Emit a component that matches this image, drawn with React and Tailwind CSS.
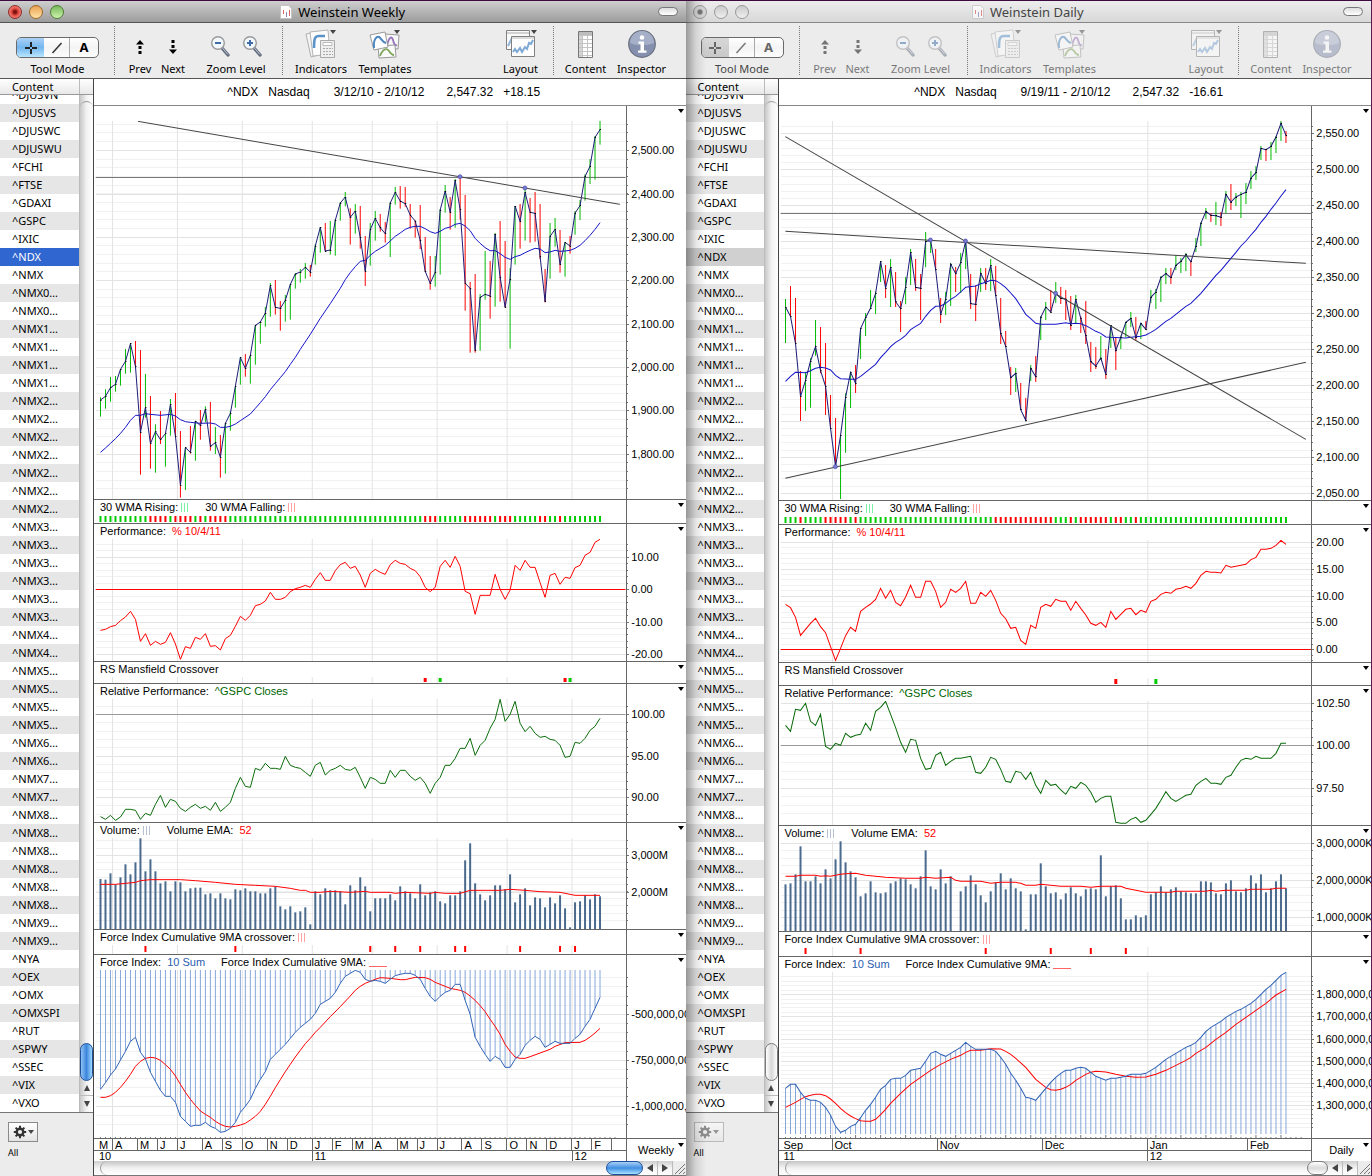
import React from 'react';
import clsx from 'clsx';

const SYMBOLS = [
  '^DJUSVN', '^DJUSVS', '^DJUSWC', '^DJUSWU', '^FCHI', '^FTSE', '^GDAXI', '^GSPC', '^IXIC', '^NDX', '^NMX',
  '^NMX0…', '^NMX0…', '^NMX1…', '^NMX1…', '^NMX1…', '^NMX1…',
  '^NMX2…', '^NMX2…', '^NMX2…', '^NMX2…', '^NMX2…', '^NMX2…', '^NMX2…',
  '^NMX3…', '^NMX3…', '^NMX3…', '^NMX3…', '^NMX3…', '^NMX3…',
  '^NMX4…', '^NMX4…', '^NMX5…', '^NMX5…', '^NMX5…', '^NMX5…', '^NMX6…', '^NMX6…', '^NMX7…', '^NMX7…',
  '^NMX8…', '^NMX8…', '^NMX8…', '^NMX8…', '^NMX8…', '^NMX8…', '^NMX9…', '^NMX9…',
  '^NYA', '^OEX', '^OMX', '^OMXSPI', '^RUT', '^SPWY', '^SSEC', '^VIX', '^VXO',
];

// All plots share one unit system: a bar every 15 units, 3 units to a pixel.
const PLOT_W = 1596;
const barX = (i) => 19.5 + 15 * i;
const snap = (v) => Math.floor(v / 3) * 3 + 1.5;
const nums = (s) => s.trim().split(/\s+/).map(Number);
const pairs = (s) => s.split(',').map((p) => nums(p));
const runs = (s) => s.split(' ').flatMap((r) => Array(Number(r.slice(1))).fill(r[0]));
const steps = (base, step, from, to) =>
  Array.from({ length: to - from + 1 }, (_, k) => base + step * (from + k));

const RED = '#f00';
const GREEN = '#0b0';
const NAVY = '#1c1c78';

/* ---------- weekly data ---------- */

// close high low direction
const weeklyBars = `885 877 935 g,874 853 911 g,848 816 890 g,838 813 860 g,793 792 842 g,769 732 806 g,716 714 803 g,784 708 784 r,982 735 1109 r,907 807 938 g,
1016 873 1091 r,980 958 1103 g,1004 918 1017 r,986 986 1085 g,898 882 992 g,993 864 993 r,1140 978 1178 r,1028 1028 1155 g,1042 963 1046 r,948 948 1067 g,
962 915 1004 r,912 904 952 g,1024 891 1037 r,1013 966 1047 g,1057 990 1118 r,955 955 1106 g,925 918 977 g,844 844 908 g,758 757 839 g,790 747 815 r,
751 751 836 g,661 661 779 g,651 648 716 g,624 606 665 g,542 534 635 g,607 525 629 r,610 588 677 r,586 570 650 g,538 537 644 g,507 504 551 g,
501 492 533 g,487 474 521 g,501 480 515 r,423 417 479 g,367 366 443 g,438 354 438 r,435 348 449 g,346 342 452 g,294 291 347 g,276 261 304 g,
337 310 419 r,318 297 386 g,397 303 431 r,498 393 543 r,374 354 482 g,340 318 407 g,368 327 380 r,386 351 413 r,294 291 456 g,262 246 299 g,
288 243 311 r,296 246 305 r,330 297 371 r,348 346 398 r,406 300 432 r,499 396 499 r,535 453 554 r,502 453 545 g,315 312 509 g,258 240 323 g,
322 276 374 r,226 222 368 g,314 220 344 r,535 270 617 r,550 531 743 r,736 507 743 r,577 567 737 g,568 438 584 g,573 468 641 r,387 384 605 g,
517 348 590 r,606 408 607 r,522 489 731 g,303 303 479 g,349 297 431 r,262 249 407 g,322 279 413 r,325 261 410 r,454 297 462 r,589 492 592 r,
394 354 521 g,373 339 425 g,478 375 503 r,412 411 515 g,423 393 446 r,324 318 389 g,302 285 345 g,214 208 287 g,184 162 237 g,97 93 224 g,74 48 119 g`;

const weeklyMa =
  '0 1042,1 1029,2 1015,3 1001,4 985,5 967,6 946,7 931,8 931,9 926,10 928,12 931,14 928,15 933,16 944,17 950,18 952,20 955,22 954,23 957,24 967,25 967,26 964,27 957,28 947,30 927,31 910,32 893,33 875,34 854,35 836,36 818,37 800,38 778,39 757,40 733,42 688,44 640,46 596,48 550,49 524,50 503,51 485,52 469,53 466,54 451,55 439,56 430,57 421,58 408,59 394,60 384,61 373,62 367,63 364,64 364,65 371,66 380,67 385,68 379,69 370,70 366,71 358,72 355,73 363,74 377,75 400,76 415,77 428,78 437,79 437,80 446,81 457,82 463,83 455,84 451,85 443,86 436,87 430,88 432,89 443,90 441,91 436,92 439,93 438,94 436,95 430,96 421,97 407,98 391,99 373,100 353';

const weeklyPerf = nums(`406 403 395 391 377 366 349 373 439 416 451 439 448 442 413 447 493 455 460 427
433 416 454 452 465 431 421 394 364 376 361 332 328 318 292 313 313 307 290 281
277 271 277 253 233 256 256 227 209 202 220 214 240 277 235 223 232 238 209 196
205 208 220 227 245 277 290 277 214 196 217 184 214 289 296 358 301 301 301 238
283 313 285 211 226 196 217 217 263 307 241 235 268 247 250 218 211 181 172 142 133`);

const weeklyRel = nums(`965 973 961 976 966 943 943 946 973 955 961 928 901 937 913 919 940 949 937 928
940 934 946 922 949 937 922 880 847 874 877 820 826 805 820 820 823 784 811 817
820 832 844 811 802 840 826 820 811 823 826 817 847 880 847 853 865 865 826 847
826 826 844 856 847 865 895 865 847 811 811 790 760 760 730 781 751 736 700 673
613 679 658 619 685 710 694 715 727 724 733 736 751 787 784 742 745 730 706 694 670`);

const weeklyVol = nums(`177 179 160 193 172 133 163 127 55 154 118 154 190 184 214 184 187 214 205 203
203 223 220 235 220 235 238 208 211 205 214 214 220 220 205 199 259 268 259 277
274 262 313 214 223 205 211 211 214 253 196 211 172 199 274 235 235 235 223 241
199 214 220 235 193 226 217 214 244 250 226 226 214 121 70 190 223 241 226 196
196 208 163 247 223 205 256 232 235 262 232 250 226 265 322 247 244 226 238 223 229`);

const weeklyVolEma =
  '0 193,3 193,5 190,7 187,8 182,10 179,16 179,19 182,23 187,27 193,31 196,35 199,38 205,40 211,41 211,42 217,44 217,46 214,50 217,53 214,54 217,58 217,59 220,61 217,66 220,67 217,69 220,72 220,74 211,80 211,82 208,85 211,88 215,92 217,95 226,100 226';

const weeklyForce = nums(`808 788 765 747 720 694 664 652 697 717 757 784 811 829 829 847 889 904 919 916
916 907 919 925 937 934 925 907 877 859 838 805 778 755 718 703 688 673 655 637
622 610 598 580 553 544 535 517 490 469 460 451 457 478 484 481 484 490 478 467
463 460 460 466 478 505 529 544 529 517 511 493 493 541 583 652 679 703 724 709
718 742 742 718 703 676 661 649 658 682 673 664 670 670 670 655 643 619 598 565 532`);

const weeklyForceMa =
  '0 832,1 832,2 827,3 817,4 802,5 784,6 763,7 739,8 724,9 715,10 712,11 714,12 721,13 734,14 748,15 768,16 793,17 817,18 838,19 856,20 873,21 883,22 892,23 904,24 913,25 919,26 921,27 919,28 915,29 910,30 900,31 889,32 874,33 853,34 829,35 803,36 779,37 755,38 733,39 711,40 691,41 671,42 655,43 637,44 622,45 606,46 590,48 560,50 528,51 511,52 499,53 490,54 484,55 478,56 473,58 475,60 479,61 479,63 472,65 473,66 478,67 487,68 493,69 499,70 505,71 508,72 511,73 517,74 528,75 541,76 557,77 575,78 598,79 619,80 643,81 673,82 694,83 711,84 715,85 715,86 710,88 699,90 688,91 679,93 668,96 667,97 661,98 651,99 639,100 625';

/* ---------- daily data ---------- */

const dailyBars = `606 582 714 g,634 543 634 r,716 579 716 r,875 798 948 r,826 802 918 g,768 760 908 g,725 645 752 g,797 666 805 r,844 714 930 r,970 870 970 r,
1085 939 1085 r,991 991 1182 g,877 865 1043 g,802 802 909 g,835 780 864 r,671 671 762 g,638 624 693 g,609 555 609 g,565 560 627 g,470 469 531 g,
549 480 579 r,487 462 606 g,590 501 606 r,611 588 681 r,546 516 598 g,442 432 540 g,547 462 558 r,550 507 645 r,409 381 487 g,407 405 444 g,
494 432 494 r,628 579 654 r,583 561 630 g,477 474 603 g,506 486 561 r,473 444 564 g,408 408 492 g,596 507 612 r,598 541 648 r,505 489 561 g,
535 489 555 r,482 462 558 g,571 483 571 r,685 579 717 r,724 678 724 r,818 786 870 r,805 789 861 g,914 834 914 r,946 879 946 r,790 780 828 g,
815 753 831 r,637 633 705 g,606 591 645 g,621 555 621 r,565 531 594 g,580 546 597 r,582 555 645 r,662 573 675 r,583 570 655 g,640 634 684 r,
692 588 717 r,770 711 801 r,783 726 792 r,759 693 765 g,808 732 822 r,662 661 729 g,736 696 795 r,696 692 732 g,652 650 697 g,640 621 666 g,
697 636 708 r,655 654 702 g,673 648 673 r,577 555 594 g,561 552 612 g,518 513 591 g,506 489 537 g,518 489 537 r,481 450 495 g,469 459 504 g,
449 444 498 g,470 470 513 r,424 399 441 g,355 352 423 g,319 309 342 g,331 325 351 r,332 291 360 g,337 321 363 r,268 258 325 g,291 237 315 r,
276 264 303 g,268 261 339 g,262 234 297 g,219 198 252 g,203 183 225 g,130 123 165 g,134 132 168 r,124 111 165 g,96 93 144 g,55 48 108 g,91 78 114 r`;

const dailyMa =
  '0 829,1 814,2 802,4 803,5 797,6 790,7 787,8 789,9 795,10 811,11 821,13 823,14 823,15 814,16 802,17 790,18 778,19 758,20 742,21 725,22 712,23 703,24 691,25 674,26 664,27 655,28 634,29 616,30 604,31 603,32 595,33 583,34 574,35 561,36 547,38 543,39 536,40 532,41 526,42 527,43 536,44 548,45 564,46 581,47 604,48 628,49 641,50 655,51 658,54 658,56 653,57 656,58 655,59 656,60 662,61 670,62 679,63 685,64 696,65 697,68 699,69 697,70 695,71 694,72 690,73 682,74 673,75 661,76 649,77 640,78 628,79 616,80 604,81 595,82 580,83 565,84 547,85 529,86 511,87 496,88 478,89 460,90 442,91 423,92 408,93 390,94 373,95 352,96 334,97 313,98 294,99 273,100 254';

const dailyPerf = nums(`313 323 352 406 388 370 355 380 398 440 481 445 407 382 394 334 322 312 298 265
295 271 307 317 291 256 292 292 244 244 274 322 307 268 277 265 244 310 310 277
289 271 301 340 356 385 382 421 433 376 385 322 313 319 298 304 304 331 304 325
345 370 376 367 382 334 358 343 328 325 344 331 337 304 298 283 277 280 268 265
259 265 250 226 214 217 217 219 196 202 199 196 193 179 172 148 148 145 136 121 133`);

const dailyRel = nums(`676 694 628 631 610 664 676 643 739 748 730 736 700 712 706 703 670 691 634 622
604 643 683 727 757 718 721 775 808 805 766 757 796 784 775 775 772 769 817 820
802 772 778 808 844 847 814 817 838 817 856 880 841 856 853 870 883 859 865 847
856 877 907 895 889 889 967 970 970 958 952 967 961 943 925 901 875 895 904 895
886 883 856 844 835 850 850 853 832 826 802 781 775 778 769 775 775 775 760 730 730`);

const dailyVol = nums(`193 190 163 79 184 184 169 190 148 175 118 64 127 154 172 229 220 184 217 220
217 190 184 175 178 193 205 169 91 199 208 148 190 169 340 214 199 166 193 226
247 214 187 160 208 175 205 214 328 223 223 130 199 220 217 238 220 202 220 229
208 205 208 106 229 199 196 235 298 298 286 292 286 223 217 199 217 208 202 214
217 220 220 184 184 187 220 223 190 181 214 217 205 166 190 163 217 205 184 163 205`);

const dailyVolEma =
  '0 169,2 169,3 166,6 166,7 169,8 167,9 169,11 163,12 161,14 160,16 166,20 172,24 175,27 175,28 172,30 175,33 172,34 181,35 184,39 184,41 190,43 187,46 187,47 190,48 196,50 196,51 193,55 199,59 199,61 202,63 199,67 199,68 205,70 211,72 217,77 217,78 214,84 214,85 211,86 214,88 211,92 211,93 208,97 208,98 205,100 205';

const dailyForce = nums(`805 793 793 817 835 841 841 847 862 886 919 937 931 919 913 893 871 853 832 808
796 778 775 775 766 751 748 745 724 700 694 703 709 700 691 682 667 679 688 688
688 688 694 712 733 760 781 805 832 835 841 823 805 787 772 760 751 751 745 742
745 757 769 775 781 775 775 772 769 763 763 763 760 751 742 730 718 709 700 691
682 676 667 652 634 622 613 604 592 583 574 568 559 550 538 523 508 496 481 466 457`);

const dailyForceMa =
  '0 862,2 847,3 838,4 830,5 826,6 823,7 823,8 827,9 837,10 850,11 865,12 878,13 888,14 896,15 902,16 904,17 904,18 898,19 884,20 868,21 850,23 820,25 793,27 772,29 751,31 733,33 718,35 706,36 697,37 691,39 691,41 686,43 687,44 694,45 703,46 715,48 742,50 778,52 802,53 809,54 811,55 808,56 802,57 793,58 781,59 772,60 763,61 757,62 754,64 756,66 763,68 769,70 772,72 771,74 763,76 751,78 736,80 721,81 712,82 700,84 682,86 658,88 637,90 613,92 592,94 571,96 550,98 525,100 508';

/* ---------- legends ---------- */

const LEGENDS = {
  wma: [
    { label: '30 WMA Rising:', swatch: 'text-green-300' },
    { label: '30 WMA Falling:', swatch: 'text-red-300' },
  ],
  perf: [{ label: 'Performance:', value: '% 10/4/11', tone: 'text-[#f00]' }],
  mansfield: [{ label: 'RS Mansfield Crossover' }],
  rel: [{ label: 'Relative Performance:', value: '^GSPC Closes', tone: 'text-[#006400]' }],
  vol: [
    { label: 'Volume:', swatch: 'text-[#b4c2d2]' },
    { label: 'Volume EMA:', value: '52', tone: 'text-[#f00]' },
  ],
  cross: [{ label: 'Force Index Cumulative 9MA crossover:', swatch: 'text-red-300' }],
  force: [
    { label: 'Force Index:', value: '10 Sum', tone: 'text-[#2a5db0]' },
    { label: 'Force Index Cumulative 9MA:', rule: true },
  ],
};

const WEEKLY = {
  title: 'Weinstein Weekly',
  range: '3/12/10 - 2/10/12',
  change: '+18.15',
  period: 'Weekly',
  gridX: [55, 250, 445, 655, 835, 1030, 1240, 1435],
  months: [
    ['M', 18], ['A', 25], ['M', 20], ['J', 20], ['J', 25], ['A', 20], ['S', 20], ['O', 25], ['N', 20], ['D', 25],
    ['J', 20], ['F', 20], ['M', 20], ['A', 25], ['M', 20], ['J', 20], ['J', 25], ['A', 20], ['S', 25], ['O', 20],
    ['N', 20], ['D', 25], ['J', 20], ['F', 20], ['', 14],
  ],
  years: [['10', 218], ['11', 260], ['12', 54]],
  panels: [
    {
      id: 'price', top: 48, height: 1134, minor: steps(136, 26.05, -3, 39),
      major: [[136, '2,500.00'], [268, '2,400.00'], [397, '2,300.00'], [526, '2,200.00'], [658, '2,100.00'], [787, '2,000.00'], [916, '1,900.00'], [1048, '1,800.00']],
      level: [217, '#777'], bars: weeklyBars, ma: weeklyMa,
      trends: [[132, 49, 1579, 298]], dots: [[1099, 215], [1294, 249]],
    },
    { id: 'wma', top: 60, height: 24, marks: runs('g10 r4 g1 r4 g1 r1 g1 r4 g39 r3 g5 r6 g1 r3 g5 r2 g2 r1 g8').map((c, i) => [i, c]), markH: 18, markW: 6 },
    {
      id: 'perf', top: 132, height: 366, minor: steps(187, 19.4, -2, 15),
      major: [[187, '10.00'], [283, '0.00'], [381, '-10.00'], [478, '-20.00']],
      level: [283, RED], line: [weeklyPerf, RED],
    },
    { id: 'mansfield', top: 546, height: 18, marks: [[65, 'r'], [68, 'g'], [93, 'r'], [94, 'g']], markH: 12, markW: 9 },
    {
      id: 'rel', top: 612, height: 369, minor: steps(659, 24.9, -1, 12),
      major: [[659, '100.00'], [784, '95.00'], [908, '90.00']],
      level: [659, '#999'], line: [weeklyRel, '#0a6b0a'],
    },
    {
      id: 'vol', top: 54, height: 273, minor: steps(106, 21.7, -2, 9),
      major: [[106, '3,000M'], [217, '2,000M']],
      columns: weeklyVol, ma: weeklyVolEma, maColor: RED,
    },
    { id: 'cross', top: 375, height: 27, marks: [9, 27, 54, 59, 64, 71, 73, 84, 92, 95].map((i) => [i, 'r']), markH: 18, markW: 6 },
    {
      id: 'force', top: 450, height: 504, minor: steps(583, 27.5, -4, 12),
      major: [[583, '-500,000,00'], [721, '-750,000,00'], [859, '-1,000,000,']],
      stems: 450, line: [weeklyForce, '#2f62b5'], ma: weeklyForceMa, maColor: RED, ticks: 0,
    },
  ],
};

const DAILY = {
  title: 'Weinstein Daily',
  range: '9/19/11 - 2/10/12',
  change: '-16.61',
  period: 'Daily',
  gridX: [160, 1105],
  months: [['Sep', 53], ['Oct', 105], ['Nov', 105], ['Dec', 105], ['Jan', 100], ['Feb', 64]],
  years: [['11', 368], ['12', 164]],
  panels: [
    {
      id: 'price', top: 48, height: 1137, minor: steps(86, 21.58, -1, 50),
      major: [[86, '2,550.00'], [193, '2,500.00'], [302, '2,450.00'], [410, '2,400.00'], [517, '2,350.00'], [625, '2,300.00'], [733, '2,250.00'], [841, '2,200.00'], [949, '2,150.00'], [1057, '2,100.00'], [1165, '2,050.00']],
      level: [325, '#777'], bars: dailyBars, ma: dailyMa,
      trends: [[19, 95, 1579, 1003], [19, 379, 1579, 475], [19, 1120, 1579, 772]],
      dots: [[454, 405], [559, 408], [169, 1085], [829, 565]],
    },
    { id: 'wma', top: 48, height: 24, marks: runs('g3 r1 g4 r5 g1 r1 g27 r12 g3 r1 g1 r6 g1 r2 g2 r1 g30').map((c, i) => [i, c]), markH: 18, markW: 6 },
    {
      id: 'perf', top: 120, height: 366, minor: steps(127, 16.1, 0, 22),
      major: [[127, '20.00'], [207, '15.00'], [289, '10.00'], [368, '5.00'], [448, '0.00']],
      level: [448, RED], line: [dailyPerf, RED],
    },
    { id: 'mansfield', top: 534, height: 21, marks: [[66, 'r'], [74, 'g']], markH: 15, markW: 9 },
    {
      id: 'rel', top: 603, height: 372, minor: steps(609, 25.6, 0, 13),
      major: [[609, '102.50'], [737, '100.00'], [865, '97.50']],
      level: [737, '#999'], line: [dailyRel, '#0a6b0a'],
    },
    {
      id: 'vol', top: 63, height: 270, minor: steps(70, 22.3, 0, 11),
      major: [[70, '3,000,000K'], [181, '2,000,000K'], [292, '1,000,000K']],
      columns: dailyVol, ma: dailyVolEma, maColor: RED,
    },
    { id: 'cross', top: 381, height: 27, marks: [4, 15, 40, 53, 61, 68].map((i) => [i, 'r']), markH: 18, markW: 6 },
    {
      id: 'force', top: 456, height: 498, minor: steps(524, 13.3, -4, 30),
      major: [[524, '1,800,000,0'], [590, '1,700,000,0'], [658, '1,600,000,0'], [724, '1,500,000,0'], [790, '1,400,000,0'], [856, '1,300,000,0']],
      stems: 942, line: [dailyForce, '#2f62b5'], ma: dailyForceMa, maColor: RED, ticks: 5,
    },
  ],
};

/* ---------- charts ---------- */

const Triangle = ({ className }) => (
  <svg viewBox="0 0 6 4" className={clsx('h-1 w-1.5', className)} fill="currentColor">
    <path d="M0 0h6L3 4z" />
  </svg>
);

const Legend = ({ items = [] }) => (
  <div className="flex h-[15px] items-center gap-4 overflow-hidden pl-1.5 whitespace-nowrap">
    {items.map((item) => (
      <span key={item.label} className="flex items-center">
        {item.label}
        {item.value && <span className={clsx('ml-1.5', item.tone)}>{item.value}</span>}
        {item.swatch && (
          <svg viewBox="0 0 8 9" className={clsx('ml-[3px] h-[9px] w-2', item.swatch)} stroke="currentColor">
            <path d="M.5 0v9M3.5 0v9M6.5 0v9" />
          </svg>
        )}
        {item.rule && <span className="mt-2 ml-[3px] h-px w-[18px] bg-red-400" />}
      </span>
    ))}
  </div>
);

const Plot = ({ panel, gridX }) => {
  const { top, height, minor = [], major = [], marks = [], level, line, ma } = panel;
  const bottom = top + height;
  const bars = panel.bars ? panel.bars.split(',').map((b) => b.trim().split(' ')) : [];

  return (
    <svg
      viewBox={`0 ${top} ${PLOT_W} ${height}`}
      preserveAspectRatio="none"
      className="block w-full"
      style={{ height: height / 3 }}
      strokeWidth="3"
      fill="none"
    >
      {minor.map((y) => <path key={y} d={`M6 ${snap(y)}H${PLOT_W}`} stroke="#f1f1f1" />)}
      {major.map(([y]) => <path key={y} d={`M6 ${snap(y)}H${PLOT_W}`} stroke="#e3e3e3" />)}
      {gridX.map((x) => <path key={x} d={`M${snap(x)} ${top}V${bottom}`} stroke="#e3e3e3" />)}
      {level && <path d={`M5 ${snap(level[0])}H${PLOT_W}`} stroke={level[1]} />}

      {marks.map(([i, c]) => (
        <rect
          key={i}
          x={barX(i) - panel.markW / 2}
          y={top + 3}
          width={panel.markW}
          height={panel.markH}
          fill={c === 'g' ? '#0c0' : RED}
        />
      ))}

      {panel.columns?.map((y, i) => (
        <rect key={i} x={barX(i) - 3} y={y} width="6" height={Math.max(bottom - y, 0)} fill="#4a6a8e" />
      ))}

      {panel.stems && line[0].map((y, i) => (
        <path key={i} d={`M${barX(i)} ${panel.stems}V${y}`} stroke="#86a7da" />
      ))}

      {/* High/low range, then closes joined on top */}
      {bars.map(([, hi, lo, c], i) => (
        <path key={i} d={`M${barX(i)} ${hi}V${lo}`} stroke={c === 'g' ? GREEN : RED} />
      ))}
      {ma && (
        <polyline
          points={pairs(ma).map(([i, y]) => `${barX(i)},${y}`).join(' ')}
          stroke={panel.maColor ?? '#1414c8'}
        />
      )}
      {bars.length > 0 && (
        <>
          <polyline points={bars.map(([close], i) => `${barX(i)},${close}`).join(' ')} stroke={NAVY} />
          <path d={bars.map(([close], i) => `M${barX(i) - 1} ${snap(close)}h4`).join('')} stroke="#000" />
        </>
      )}
      {line && <polyline points={line[0].map((y, i) => `${barX(i)},${y}`).join(' ')} stroke={line[1]} />}

      {panel.trends?.map(([x1, y1, x2, y2]) => (
        <line key={y1} x1={x1} y1={y1} x2={x2} y2={y2} stroke="#444" />
      ))}
      {panel.dots?.map(([cx, cy]) => (
        <circle key={cx} cx={cx} cy={cy} r="6" fill="#7a7ad8" stroke="#4848a0" strokeWidth="2" />
      ))}

      {panel.ticks !== undefined && (
        <path
          d={Array.from({ length: 104 }, (_, i) => {
            const long = panel.ticks > 0 && i % panel.ticks === 4;
            return `M${barX(i)} ${bottom}v-${long ? 9 : 3}`;
          }).join('')}
          stroke="#777"
        />
      )}
    </svg>
  );
};

const Scale = ({ panel }) => {
  const { top, height, minor = [], major = [] } = panel;
  return (
    <svg
      viewBox={`0 ${top} 177 ${height}`}
      className="block w-[59px] overflow-visible"
      style={{ height: height / 3 }}
      strokeWidth="3"
      stroke="#777"
    >
      {minor.map((y) => <path key={y} d={`M0 ${snap(y)}h3`} />)}
      {major.map(([y]) => <path key={y} d={`M0 ${snap(y)}h6`} />)}
      {major.map(([y, label]) => (
        <text key={label} x="13" y={snap(y) + 11} fontSize="33" fill="#000" stroke="none">{label}</text>
      ))}
    </svg>
  );
};

const Panel = ({ panel, gridX }) => (
  <section className="flex border-b border-[#666]">
    <div className="min-w-0 flex-1">
      <Legend items={LEGENDS[panel.id]} />
      <Plot panel={panel} gridX={gridX} />
    </div>
    <div className="w-[60px] overflow-hidden border-l border-[#666]">
      <div className="flex h-[15px] justify-end pt-[3px] pr-0.5">
        <button type="button" aria-label="Panel menu" className="h-1 w-1.5">
          <Triangle className="block" />
        </button>
      </div>
      <Scale panel={panel} />
    </div>
  </section>
);

const AxisRow = ({ cells, className }) => {
  const total = cells.reduce((sum, [, span]) => sum + span, 0);
  return (
    <div className={clsx('flex', className)}>
      {cells.map(([label, span], i) => (
        <span
          key={i}
          className={i > 0 ? 'border-l border-[#666] pl-0.5' : 'pl-[5px]'}
          style={{ width: `${(span / total) * 100}%` }}
        >
          {label}
        </span>
      ))}
    </div>
  );
};

const TimeAxis = ({ chart }) => (
  <div className="flex h-[22px] text-[11px]">
    <div className="min-w-0 flex-1">
      <AxisRow cells={chart.months} className="h-3 border-b border-[#666] leading-[12px]" />
      <AxisRow cells={chart.years} className="h-2.5 leading-[11px]" />
    </div>
    <button type="button" className="flex w-[60px] border-l border-[#666] pr-0.5 pl-2">
      <span className="flex-1 self-center text-center leading-[20px]">{chart.period}</span>
      <Triangle className="mt-1" />
    </button>
  </div>
);

/* ---------- scroll bars ---------- */

const SmallArrow = ({ d }) => (
  <svg viewBox="0 0 8 8" className="h-2 w-2 fill-[#444]">
    <path d={d} />
  </svg>
);

const HScroll = ({ active }) => (
  <div className="flex h-[15px] border-b border-[#777] bg-linear-to-b from-[#cfcfcf] via-[#f4f4f4] to-[#fdfdfd]">
    <div className="ml-1.5 flex flex-1 justify-end rounded-l-full border-l border-[#9a9a9a] bg-linear-to-b from-[#c4c4c4] via-[#f2f2f2] to-white">
      <div
        className={clsx(
          'h-[14px] rounded-full border',
          active
            ? 'w-[37px] border-[#1d4f9c] bg-linear-to-b from-[#a8d0f6] via-[#3f8fe2] to-[#a9e2ff]'
            : 'w-[21px] border-[#7a7a7a] bg-linear-to-b from-white via-[#dadada] to-white',
        )}
      />
    </div>
    <button type="button" aria-label="Scroll left" className="flex w-[15px] items-center justify-center border-r border-[#bbb]">
      <SmallArrow d="M7 0v8L1 4z" />
    </button>
    <button type="button" aria-label="Scroll right" className="flex w-[15px] items-center justify-center border-r border-[#bbb]">
      <SmallArrow d="M1 0v8l6-4z" />
    </button>
    <svg viewBox="0 0 13 14" className="h-[14px] w-[13px] bg-[#ececec]" stroke="#777">
      <path d="M2 13L12 3M6 13l6-6M10 13l2-2" />
    </svg>
  </div>
);

const VScroll = ({ active }) => (
  <div className="flex w-[14px] flex-col border-l border-[#bbb] bg-linear-to-r from-[#c8c8c8] via-[#f2f2f2] to-white">
    <div className="mt-1.5 flex flex-1 flex-col justify-end rounded-t-full border-t border-[#9a9a9a]">
      <div
        className={clsx(
          'h-[38px] rounded-full border',
          active
            ? 'border-[#1d4f9c] bg-linear-to-r from-[#8fc2f4] via-[#3b86dc] to-[#9fd8ff]'
            : 'border-[#7a7a7a] bg-linear-to-r from-white via-[#d8d8d8] to-white',
        )}
      />
    </div>
    <button type="button" aria-label="Scroll up" className="flex h-[15px] items-center justify-center border-b border-[#bbb]">
      <SmallArrow d="M1 7h6L4 1z" />
    </button>
    <button type="button" aria-label="Scroll down" className="flex h-4 items-center justify-center">
      <SmallArrow d="M1 1h6L4 7z" />
    </button>
  </div>
);

/* ---------- sidebar ---------- */

const GearIcon = () => (
  <svg viewBox="0 0 14 14" className="h-3.5 w-3.5" fill="none" stroke="#333">
    <circle cx="7" cy="7" r="3.300" strokeWidth="2.400" />
    <path
      d="M7 .8v2.400M7 10.800v2.400M.8 7h2.400M10.800 7h2.400M2.600 2.600l1.700 1.700M9.700 9.700l1.700 1.700M2.600 11.400l1.700-1.700M9.700 4.300l1.700-1.700"
      strokeWidth="2"
    />
  </svg>
);

const Sidebar = ({ active }) => (
  <aside
    className={clsx(
      'flex shrink-0 flex-col border-r border-[#444] bg-white font-["Noto_Sans",sans-serif] text-[11px]',
      active ? 'w-[94px]' : 'w-[93px]',
    )}
  >
    <div className="flex h-4 border-b border-[#999] bg-linear-to-b from-white to-[#e8e8e8] leading-[16px]">
      <span className="flex-1 pl-3">Content</span>
      <span className="w-[14px] border-l border-[#bbb]" />
    </div>
    <div className="flex h-0 grow">
      <ul className="flex min-w-0 flex-1 flex-col justify-end overflow-hidden">
        {SYMBOLS.map((name, i) => (
          <li
            key={i}
            className={clsx(
              'h-[18px] shrink-0 pl-3 leading-[18px]',
              name === '^NDX'
                ? active ? 'bg-[#2f66d0] text-white' : 'bg-[#d0d0d0]'
                : i % 2 === 1 && 'bg-[#e6e6e6]',
            )}
          >
            {name}
          </li>
        ))}
      </ul>
      <VScroll active={active} />
    </div>
    <div className="h-16 border-t border-[#777] bg-[#ececec] px-2 pt-[9px]">
      <button
        type="button"
        aria-label="Actions"
        className={clsx(
          'flex h-5 w-[30px] items-center justify-center gap-px border border-[#8a8a8a] bg-linear-to-b from-white to-[#e4e4e4]',
          !active && 'opacity-50',
        )}
      >
        <GearIcon />
        <Triangle className="text-[#444]" />
      </button>
      <div className="mt-1 text-[9px] leading-[14px]">All</div>
    </div>
  </aside>
);

/* ---------- toolbar ---------- */

const Tool = ({ label, className, children }) => (
  <button type="button" className={clsx('flex h-full shrink-0 flex-col items-center', className)}>
    <span className="flex h-[37px] items-end justify-center">{children}</span>
    <span className="mt-px leading-[16px] whitespace-nowrap">{label}</span>
  </button>
);

const Divider = ({ className }) => (
  <span className={clsx('mt-[3px] h-[49px] w-px shrink-0 border-l border-dotted border-[#777]', className)} />
);

const Magnifier = ({ plus }) => (
  <svg viewBox="0 0 20 22" className="h-[22px] w-5">
    <path d="M12 13l6 7" stroke="#666f80" strokeWidth="3.4" strokeLinecap="round" />
    <path d="M12.4 13l5.4 6.4" stroke="#b9c3d4" strokeWidth="1" />
    <circle cx="8" cy="8" r="6.3" fill="#f3f8fd" stroke="#9a9a9a" strokeWidth="1.4" />
    <path d={plus ? 'M5 8h6M8 5v6' : 'M5 8h6'} stroke="#3d6ca8" strokeWidth="2" />
  </svg>
);

const IndicatorsIcon = () => (
  <svg viewBox="0 0 34 32" className="h-8 w-[34px]" fill="none">
    <path d="M2 6l16-3 4 22-15 4z" fill="#f4f4f4" stroke="#b0b0b0" />
    <path d="M6 4l18-2 2 24-17 2z" fill="#fdfdfd" stroke="#b4b4b4" />
    <path d="M10 20c0-10 1-12 5-12h6" stroke="#5b93c9" strokeWidth="2.6" />
    <path d="M16.500 12.500h14v17h-14z" fill="#efefef" stroke="#aaa" />
    <path d="M19 14.500h9v3h-9z" fill="#fff" stroke="#bbb" />
    <path d="M19 20.500h10M19 23.500h10M19 26.500h10" stroke="#aaa" strokeDasharray="2 1" />
    <path d="M26 2h6l-3 4z" fill="#444" />
  </svg>
);

const TemplatesIcon = () => (
  <svg viewBox="0 0 34 32" className="h-8 w-[34px]" fill="none">
    <path d="M17 6l14 1-1 14-14-1z" fill="#f7f7f7" stroke="#999" />
    <path d="M19 18c2-10 5-10 6-6s2 6 4 5" stroke="#9672bd" strokeWidth="1.800" />
    <path d="M10 18l17-1 1 12-17 1z" fill="#fafafa" stroke="#999" />
    <path d="M12 28c3-8 7-8 9-5s3 4 5 4" stroke="#7fa55b" strokeWidth="1.800" />
    <path d="M2 7l15-3 3 15-14 3z" fill="#fff" stroke="#999" />
    <path d="M6 20c-1-9 3-12 5-11s3 5 7 6" stroke="#4d86c0" strokeWidth="2" />
    <path d="M26 2h6l-3 4z" fill="#444" />
  </svg>
);

const LayoutIcon = () => (
  <svg viewBox="0 0 34 32" className="h-8 w-[34px]" fill="none">
    <path d="M2.500 2.500h23v19h-23z" fill="#fafafa" stroke="#808080" />
    <path d="M3 5h22" stroke="#aaa" />
    <path d="M4 18l3-6 3 3" stroke="#8fb3d9" strokeWidth="2" />
    <path d="M7.500 8.500h23v20h-23z" fill="#fdfdfd" stroke="#808080" />
    <path d="M8 10h22" stroke="#bbb" />
    <path d="M9 24l2-3 2 3 3-4 2 4 3-5 2 2 2-6 2 1 2-4" stroke="#7ea8d4" strokeWidth="2" />
    <path d="M27 2h6l-3 4z" fill="#444" />
  </svg>
);

const ContentIcon = () => (
  <svg viewBox="0 0 16 28" className="mb-px h-7 w-4" fill="none">
    <path d="M.5 .5h14v26h-14z" fill="#fff" stroke="#777" />
    <path d="M1 1h13v3H1z" fill="#bdbdbd" />
    <path d="M1 4h3v22H1z" fill="#d5d5d5" />
    <path d="M4.500 4v22M9.500 4v22M1 4.500h13M1 8.500h13M1 12.500h13M1 16.500h13M1 20.500h13M1 24.500h13" stroke="#c4c4c4" />
  </svg>
);

const InspectorIcon = () => (
  <svg viewBox="0 0 28 28" className="h-7 w-7">
    <circle cx="14" cy="14" r="13.300" fill="#8490ad" stroke="#6d7280" strokeWidth="1.200" />
    <path d="M2 13a12 12 0 0 1 24 0c-7 3-17 3-24 0z" fill="#a5afc8" />
    <circle cx="14" cy="7.500" r="2.300" fill="#fff" />
    <path d="M10.500 11.500h5.500v9h2.500v2.300h-8.500v-2.300h2.500v-6.700h-2z" fill="#fff" />
  </svg>
);

const StepIcon = ({ down }) => (
  <svg viewBox="0 0 8 14" className={clsx('mb-1 h-3.5 w-2', down && 'rotate-180')}>
    <path d="M0 4.500L4 0l4 4.500zM2.500 6h3v3h-3zM2.500 11h3v3h-3z" />
  </svg>
);

const ToolMode = ({ active }) => (
  <div className="flex w-[83px] shrink-0 flex-col items-center pt-3.5">
    <div
      role="group"
      aria-label="Tool Mode"
      className="flex h-[21px] w-full overflow-hidden rounded-[5px] border border-[#6a6a6a] bg-linear-to-b from-white via-[#f4f4f4] to-[#fdfdfd]"
    >
      <button
        type="button"
        aria-label="Crosshair"
        className={clsx(
          'flex flex-1 items-center justify-center',
          active ? 'bg-linear-to-b from-[#a9d0f5] via-[#74b6ee] to-[#b8e6ff]' : 'bg-linear-to-b from-[#d8d8d8] to-[#c8c8c8]',
        )}
      >
        <svg viewBox="0 0 12 12" className="h-3 w-3" stroke={active ? '#222' : '#666'} strokeWidth="2">
          <path d="M6 0v5M6 7v5M0 6h5M7 6h5" />
        </svg>
      </button>
      <button type="button" aria-label="Line" className="flex w-[26px] items-center justify-center border-r border-[#aaa]">
        <svg viewBox="0 0 12 12" className="h-3 w-3" stroke={active ? '#333' : '#777'} strokeWidth="1.500">
          <path d="M1.500 11l9-10" />
        </svg>
      </button>
      <button
        type="button"
        aria-label="Text"
        className={clsx('w-[28px] text-[13px] leading-[19px] font-bold', active ? 'text-black' : 'text-[#666]')}
      >
        A
      </button>
    </div>
    <span className={clsx('mt-[3px] leading-[16px]', !active && 'text-[#444]')}>Tool Mode</span>
  </div>
);

const Toolbar = ({ active }) => {
  const dim = !active && 'opacity-50';
  return (
    <div
      className={clsx(
        'flex h-14 overflow-hidden border-b border-[#555] bg-[#ececec] pr-[18px] font-["Noto_Sans",sans-serif] text-[11px]',
        active ? 'pl-4' : 'pl-[15px]',
      )}
    >
      <ToolMode active={active} />
      <Divider className="ml-[15px]" />
      <Tool label="Prev" className={clsx('ml-[9px] w-8', dim)}>
        <span className="pb-0.5"><StepIcon /></span>
      </Tool>
      <Tool label="Next" className={clsx('ml-px w-8', dim)}>
        <span className="pb-0.5"><StepIcon down /></span>
      </Tool>
      <div className={clsx('ml-4 flex w-[62px] shrink-0 flex-col items-center', dim)}>
        <div className="flex h-[38px] items-end gap-3 pb-1">
          <button type="button" aria-label="Zoom out"><Magnifier /></button>
          <button type="button" aria-label="Zoom in"><Magnifier plus /></button>
        </div>
        <span className="leading-[16px] whitespace-nowrap">Zoom Level</span>
      </div>
      <Divider className="ml-[15px]" />
      <Tool label="Indicators" className={clsx('ml-2.5 w-14', dim)}><IndicatorsIcon /></Tool>
      <Tool label="Templates" className={clsx('ml-2 w-14', dim)}><TemplatesIcon /></Tool>
      <span className="flex-1" />
      <Tool label="Layout" className={clsx('w-10', dim)}><LayoutIcon /></Tool>
      <Divider className="ml-3" />
      <Tool label="Content" className={clsx('ml-2.5 w-11', dim)}><ContentIcon /></Tool>
      <Tool label="Inspector" className={clsx('ml-2 w-[52px]', dim)}>
        <span className="pb-0.5"><InspectorIcon /></span>
      </Tool>
    </div>
  );
};

/* ---------- window ---------- */

const LIGHTS = [
  ['Close', 'border-[#8e2a25] bg-radial from-[#7c0f0c] from-15% via-[#e04a42] via-40% to-[#f9a7a0]'],
  ['Minimize', 'border-[#a0682a] bg-linear-to-b from-[#e9a052] to-[#ffe3a4]'],
  ['Zoom', 'border-[#4d7d35] bg-linear-to-b from-[#77b95a] to-[#cdf3ac]'],
];

const TitleBar = ({ title, active }) => (
  <header
    className={clsx(
      'flex h-[22px] items-center border-b',
      active
        ? 'border-[#555] bg-linear-to-b from-[#cfcfcf] to-[#9c9c9c] pl-2'
        : 'border-[#888] bg-linear-to-b from-[#ededed] to-[#d8d8d8] pl-[7px]',
    )}
  >
    <div className="flex w-[60px] gap-[7px]">
      {LIGHTS.map(([name, tone], i) => (
        <button
          key={name}
          type="button"
          aria-label={name}
          className={clsx(
            'h-3.5 w-3.5 rounded-full border',
            active && tone,
            !active && 'border-[#999]',
            !active && (i === 0 ? 'bg-radial from-[#777] from-20% to-[#d8d8d8] to-40%' : 'bg-linear-to-b from-[#cacaca] to-[#efefef]'),
          )}
        />
      ))}
    </div>
    <h1 className={clsx('flex flex-1 items-center justify-center gap-1.5 font-["Noto_Sans",sans-serif] text-[13px] leading-[20px]', !active && 'text-[#444]')}>
      <svg viewBox="0 0 12 14" className={clsx('h-3.5 w-3', !active && 'opacity-70')}>
        <path d="M.5 .5h8l3 3v10h-11z" fill="#fff" stroke="#c4c4c4" />
        <path d="M3.500 5v4M9.500 5v6" stroke="#d66" />
        <path d="M6.500 7v5" stroke="#88b" />
      </svg>
      {title}
    </h1>
    <div className="flex w-[68px] justify-end pr-2">
      <button type="button" aria-label="Toggle toolbar" className="h-[9px] w-5 rounded-full border border-[#777] bg-linear-to-b from-[#ddd] to-white" />
    </div>
  </header>
);

const ChartWindow = ({ chart, active = false }) => (
  <main className={clsx('relative flex min-w-0 flex-1 flex-col bg-white', !active && 'border-r border-[#5a1a55]')}>
    <TitleBar title={chart.title} active={active} />
    <Toolbar active={active} />
    <div className="flex">
      <Sidebar active={active} />
      <div className="min-w-0 flex-1 text-[11px]">
        <div className="flex h-[27px] items-center justify-center border-b border-[#888] pr-3 text-[12px] whitespace-nowrap">
          <span>^NDX</span>
          <span className="ml-2.5">Nasdaq</span>
          <span className="ml-6">{chart.range}</span>
          <span className="ml-[22px]">2,547.32</span>
          <span className="ml-2.5">{chart.change}</span>
        </div>
        {chart.panels.map((panel) => (
          <Panel key={panel.id} panel={panel} gridX={chart.gridX} />
        ))}
        <TimeAxis chart={chart} />
        <HScroll active={active} />
      </div>
    </div>
    {/* Shadow cast by the front window */}
    {!active && (
      <div className="pointer-events-none absolute inset-y-0 left-0 w-5 bg-linear-to-r from-black/35 via-black/10 to-transparent" />
    )}
  </main>
);

export default function App() {
  return (
    <div className='flex bg-[#3c0a40] pt-px font-["Liberation_Sans",Arial,sans-serif] text-black'>
      <ChartWindow chart={WEEKLY} active />
      <ChartWindow chart={DAILY} />
    </div>
  );
}
